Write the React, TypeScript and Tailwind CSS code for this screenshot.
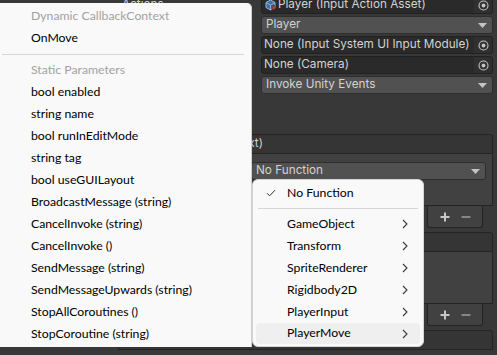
import React from "react";

function Picker() {
  return (
    <div className="flex h-full w-[18px] items-center justify-center bg-[#303030]">
      <svg width="11" height="11" viewBox="0 0 11 11">
        <circle cx="5.5" cy="5.5" r="4.5" fill="none" stroke="#c4c4c4" strokeWidth="1.1" />
        <circle cx="5.5" cy="5.5" r="1.9" fill="#c4c4c4" />
      </svg>
    </div>
  );
}

function Arrow() {
  return (
    <svg width="9" height="5" viewBox="0 0 9 5">
      <path d="M0 0H9L4.5 5Z" fill="#c4c4c4" />
    </svg>
  );
}

function AssetIcon() {
  return (
    <svg width="13" height="12" viewBox="0 0 13 12">
      <path d="M2 3.5 6.5 1 11 3.5V8.5L6.5 11 2 8.5Z" fill="#3f6f9e" stroke="#8fb8df" strokeWidth="1" />
      <path d="M6.5 6V11M2 3.5 6.5 6 11 3.5" fill="none" stroke="#8fb8df" strokeWidth="0.9" />
      <path d="M7.5 6.5h3.5v4h-3.5z" fill="#2a2a2a" />
      <path d="M8.2 7.2v3M9.4 7.2v3M10.6 7.2v3" stroke="#e0452f" strokeWidth="0.9" />
    </svg>
  );
}

function ObjectField({ children }: { children: React.ReactNode }) {
  return (
    <div className="flex h-[18px] items-center overflow-hidden rounded-[3px] border border-[#212121] bg-[#2a2a2a]">
      <div className="flex flex-1 items-center gap-[1px] overflow-hidden whitespace-nowrap pl-[2px]">{children}</div>
      <Picker />
    </div>
  );
}

function Dropdown({ label }: { label: string }) {
  return (
    <div className="flex h-[18px] items-center justify-between rounded-[3px] border border-[#2e2e2e] bg-[#515151] pl-[4px] pr-[5px]">
      <span className="whitespace-nowrap">{label}</span>
      <Arrow />
    </div>
  );
}

function Row({ label, children }: { label?: string; children: React.ReactNode }) {
  return (
    <div className="flex items-center">
      <div className="w-[261px] shrink-0 pl-[122px] whitespace-nowrap">{label}</div>
      <div className="flex-1">{children}</div>
    </div>
  );
}

function Footer() {
  return (
    <div className="flex justify-end pr-[10px]">
      <div className="flex h-[22px] w-[56px] items-center justify-around rounded-b-[3px] border-x border-b border-[#242424] bg-[#414141] px-[6px]">
        <svg width="10" height="10" viewBox="0 0 10 10">
          <path d="M5 0.5V9.5M0.5 5H9.5" stroke="#c8c8c8" strokeWidth="2" />
        </svg>
        <svg width="10" height="10" viewBox="0 0 10 10">
          <path d="M0.5 5H9.5" stroke="#858585" strokeWidth="2" />
        </svg>
      </div>
    </div>
  );
}

function Check() {
  return (
    <svg width="10" height="8" viewBox="0 0 10 8">
      <path d="M1 4.2 3.6 6.8 9 1.2" fill="none" stroke="#2b2b2b" strokeWidth="1" />
    </svg>
  );
}

function Chevron() {
  return (
    <svg width="6" height="10" viewBox="0 0 6 10">
      <path d="M1 1 5 5 1 9" fill="none" stroke="#3a3a3a" strokeWidth="1.1" />
    </svg>
  );
}

const staticItems = [
  "bool enabled",
  "string name",
  "bool runInEditMode",
  "string tag",
  "bool useGUILayout",
  "BroadcastMessage (string)",
  "CancelInvoke (string)",
  "CancelInvoke ()",
  "SendMessage (string)",
  "SendMessageUpwards (string)",
  "StopAllCoroutines ()",
  "StopCoroutine (string)",
];

const components = ["GameObject", "Transform", "SpriteRenderer", "Rigidbody2D", "PlayerInput", "PlayerMove"];

export default function App() {
  return (
    <div className="relative h-[355px] w-[497px] overflow-hidden bg-[#383838] font-['Inter',sans-serif] text-[11.75px] text-[#d2d2d2]">
      {/* inspector */}
      <div className="mt-[-4px] flex flex-col gap-[2px] pr-[4px]">
        <Row label="Actions">
          <ObjectField>
            <AssetIcon />
            <span>Player (Input Action Asset)</span>
          </ObjectField>
        </Row>
        <Row>
          <Dropdown label="Player" />
        </Row>
        <Row>
          <ObjectField>
            <span>None (Input System UI Input Module)</span>
          </ObjectField>
        </Row>
        <Row>
          <ObjectField>
            <span>None (Camera)</span>
          </ObjectField>
        </Row>
        <Row>
          <Dropdown label="Invoke Unity Events" />
        </Row>
      </div>

      <div className="mt-[40px] flex flex-col gap-[4px]">
        {/* Move event */}
        <div className="ml-[118px] mr-[4px]">
          <div className="flex h-[20px] items-center justify-end overflow-hidden rounded-t-[3px] border border-[#242424] bg-[#353535] pr-[229px]">
            <span className="whitespace-nowrap">Move (CallbackContext)</span>
          </div>
          <div className="h-[52px] border-x border-b border-[#242424] bg-[#414141] pl-[132px] pr-[6px] pt-[8px]">
            <Dropdown label="No Function" />
          </div>
          <Footer />
        </div>
        {/* Look event */}
        <div className="ml-[118px] mr-[4px]">
          <div className="h-[20px] rounded-t-[3px] border border-[#242424] bg-[#353535]" />
          <div className="h-[52px] border-x border-b border-[#242424] bg-[#414141]" />
          <Footer />
        </div>
        {/* Fire event */}
        <div className="ml-[118px] mr-[4px] h-[20px] rounded-t-[3px] border border-[#242424] bg-[#353535]" />
      </div>

      {/* function menu */}
      <div className="absolute left-0 top-[3px] h-[344px] w-[252px] rounded-tr-[5px] border-r border-[#cfcfcf] bg-[#f9f9f9] pt-[2px] font-['Lato',sans-serif] text-[12.25px] text-[#000]">
        <div className="flex h-[22px] items-center pl-[31px] text-[#a2a2a2]">Dynamic CallbackContext</div>
        <div className="flex h-[22px] items-center pl-[31px]">OnMove</div>
        <div className="flex h-[10px] items-center pl-[2px] pr-[7px]">
          <div className="h-px w-full bg-[#d6d6d6]" />
        </div>
        <div className="flex h-[22px] items-center pl-[31px] text-[#a2a2a2]">Static Parameters</div>
        {staticItems.map((s) => (
          <div key={s} className="flex h-[22px] items-center pl-[31px]">
            {s}
          </div>
        ))}
      </div>

      {/* component submenu */}
      <div className="absolute left-[252px] top-[179px] h-[168px] w-[172px] rounded-[6px] border border-[#d4d4d4] bg-[#f9f9f9] pt-[2px] font-['Lato',sans-serif] text-[12.25px] text-[#000]">
        <div className="flex h-[22px] items-center">
          <div className="flex w-[34px] justify-center pl-[2px]">
            <Check />
          </div>
          <span>No Function</span>
        </div>
        <div className="flex h-[9px] items-center px-[5px]">
          <div className="h-px w-full bg-[#d6d6d6]" />
        </div>
        {components.map((c) => (
          <div
            key={c}
            className={
              c === "PlayerMove"
                ? "mx-[3px] flex h-[21px] items-center justify-between rounded-[4px] bg-[#efefef] pl-[31px] pr-[12px]"
                : "mx-[3px] flex h-[22px] items-center justify-between pl-[31px] pr-[12px]"
            }
          >
            <span>{c}</span>
            <Chevron />
          </div>
        ))}
      </div>
    </div>
  );
}
